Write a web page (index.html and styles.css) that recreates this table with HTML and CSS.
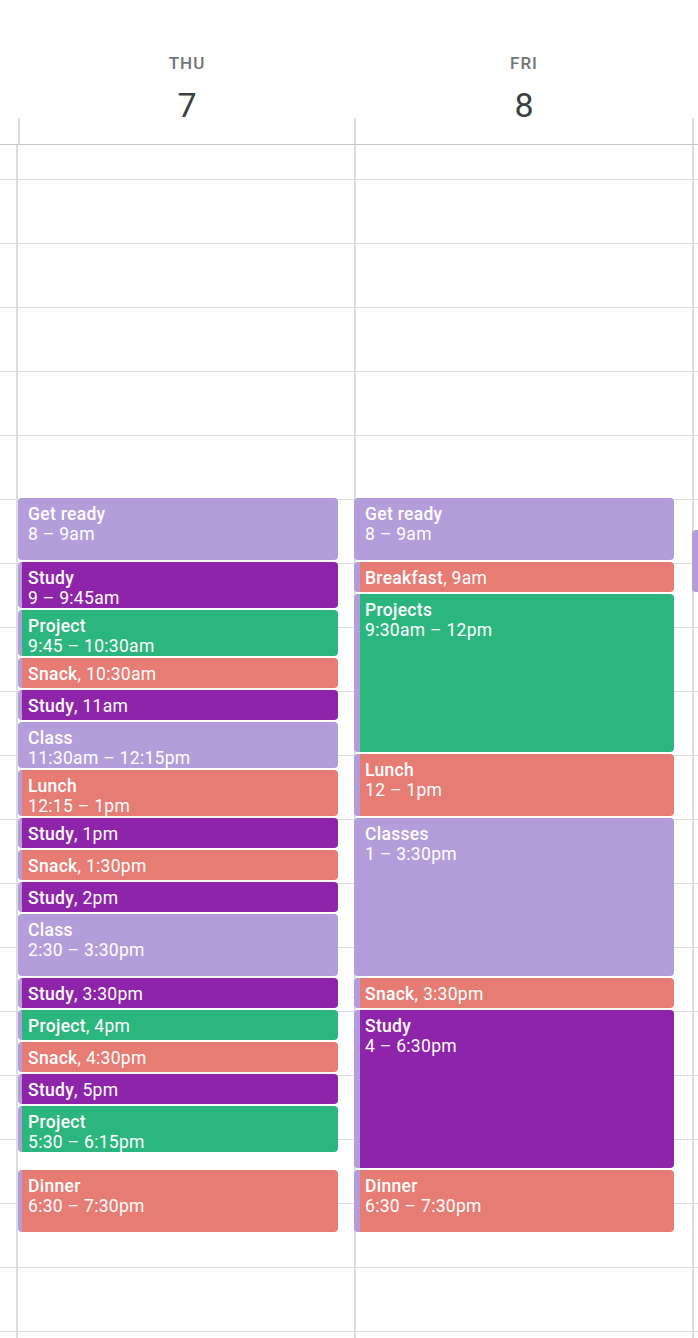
FILE: index.html
```html
<!DOCTYPE html>
<html lang="en">
<head>
<meta charset="utf-8">
<title>Week view</title>
<link rel="stylesheet" href="styles.css">
</head>
<body>
<div class="page">
  <header class="head">
    <div class="head-gutter"></div>
    <div class="day-head thu">
      <div class="day-label">
        <span class="dow">THU</span>
        <span class="dom">7</span>
      </div>
      <div class="head-strip"></div>
    </div>
    <div class="day-head fri">
      <div class="day-label">
        <span class="dow">FRI</span>
        <span class="dom">8</span>
      </div>
      <div class="head-strip"></div>
    </div>
    <div class="day-head sat">
      <div class="day-label"></div>
      <div class="head-strip"></div>
    </div>
  </header>

  <main class="body">
    <div class="body-inner">
      <div class="rows">
        <div class="row"></div><div class="row"></div><div class="row"></div><div class="row"></div>
        <div class="row"></div><div class="row"></div><div class="row"></div><div class="row"></div>
        <div class="row"></div><div class="row"></div><div class="row"></div><div class="row"></div>
        <div class="row"></div><div class="row"></div><div class="row"></div><div class="row"></div>
        <div class="row"></div><div class="row"></div><div class="row"></div><div class="row"></div>
      </div>
      <div class="days">
        <div class="gutter"></div>
        <div class="day thu">
          <div class="ev lav" style="top:383px;height:62px"><div class="t">Get ready</div><div>8 – 9am</div></div>
          <div class="ev grape strip" style="top:447px;height:46px"><div class="t">Study</div><div>9 – 9:45am</div></div>
          <div class="ev sage strip" style="top:495px;height:46px"><div class="t">Project</div><div>9:45 – 10:30am</div></div>
          <div class="ev flam strip" style="top:543px;height:30px"><span class="t">Snack</span>, 10:30am</div>
          <div class="ev grape strip" style="top:575px;height:30px"><span class="t">Study</span>, 11am</div>
          <div class="ev lav" style="top:607px;height:46px"><div class="t">Class</div><div>11:30am – 12:15pm</div></div>
          <div class="ev flam strip" style="top:655px;height:46px"><div class="t">Lunch</div><div>12:15 – 1pm</div></div>
          <div class="ev grape strip" style="top:703px;height:30px"><span class="t">Study</span>, 1pm</div>
          <div class="ev flam strip" style="top:735px;height:30px"><span class="t">Snack</span>, 1:30pm</div>
          <div class="ev grape strip" style="top:767px;height:30px"><span class="t">Study</span>, 2pm</div>
          <div class="ev lav" style="top:799px;height:62px"><div class="t">Class</div><div>2:30 – 3:30pm</div></div>
          <div class="ev grape strip" style="top:863px;height:30px"><span class="t">Study</span>, 3:30pm</div>
          <div class="ev sage strip" style="top:895px;height:30px"><span class="t">Project</span>, 4pm</div>
          <div class="ev flam strip" style="top:927px;height:30px"><span class="t">Snack</span>, 4:30pm</div>
          <div class="ev grape strip" style="top:959px;height:30px"><span class="t">Study</span>, 5pm</div>
          <div class="ev sage strip" style="top:991px;height:46px"><div class="t">Project</div><div>5:30 – 6:15pm</div></div>
          <div class="ev flam strip" style="top:1055px;height:62px"><div class="t">Dinner</div><div>6:30 – 7:30pm</div></div>
        </div>
        <div class="day fri">
          <div class="ev lav" style="top:383px;height:62px"><div class="t">Get ready</div><div>8 – 9am</div></div>
          <div class="ev flam strip" style="top:447px;height:30px"><span class="t">Breakfast</span>, 9am</div>
          <div class="ev sage strip" style="top:479px;height:158px"><div class="t">Projects</div><div>9:30am – 12pm</div></div>
          <div class="ev flam strip" style="top:639px;height:62px"><div class="t">Lunch</div><div>12 – 1pm</div></div>
          <div class="ev lav" style="top:703px;height:158px"><div class="t">Classes</div><div>1 – 3:30pm</div></div>
          <div class="ev flam strip" style="top:863px;height:30px"><span class="t">Snack</span>, 3:30pm</div>
          <div class="ev grape strip" style="top:895px;height:158px"><div class="t">Study</div><div>4 – 6:30pm</div></div>
          <div class="ev flam strip" style="top:1055px;height:62px"><div class="t">Dinner</div><div>6:30 – 7:30pm</div></div>
        </div>
        <div class="day sat">
          <div class="ev lav" style="top:415px;height:62px"></div>
        </div>
      </div>
    </div>
  </main>
</div>
</body>
</html>
```

FILE: styles.css
```css
html, body {
  margin: 0;
  padding: 0;
  background: #fff;
}

.page {
  width: 698px;
  height: 1338px;
  overflow: hidden;
  font-family: Roboto, "Noto Sans", Arial, sans-serif;
  background: #fff;
}

/* ---------- header ---------- */
.head {
  display: flex;
  height: 145px;
  box-sizing: border-box;
  border-bottom: 1px solid #c6c7ca;
}

.head-gutter {
  width: 18px;
  flex: none;
}

.day-head {
  display: flex;
  flex-direction: column;
  flex: none;
}

.day-head.thu { width: 336px; }
.day-head.fri { width: 338px; }
.day-head.sat { width: 20px; }

.day-label {
  height: 118px;
  display: flex;
  flex-direction: column;
  align-items: center;
  margin-left: 2px;
}

.head-strip {
  flex: 1;
  border-left: 2px solid #dadce0;
}

.dow {
  margin-top: 53px;
  font-size: 17px;
  line-height: 20px;
  font-weight: 500;
  letter-spacing: 1px;
  color: #70757a;
}

.dom {
  margin-top: 15px;
  font-size: 34px;
  line-height: 34px;
  font-weight: 400;
  color: #3c4043;
}

/* ---------- body ---------- */
.body {
  height: 1193px;
  overflow: hidden;
}

.body-inner {
  display: grid;
  margin-top: -30px;
}

.rows, .days {
  grid-area: 1 / 1;
}

.row {
  height: 64px;
  box-sizing: border-box;
  border-top: 1px solid #dadce0;
}

.days {
  display: flex;
  align-items: stretch;
}

.gutter {
  width: 16px;
  flex: none;
}

.day {
  position: relative;
  flex: none;
  width: 336px;
  border-left: 2px solid #dadce0;
}

.day.sat {
  width: 40px;
}

/* ---------- events ---------- */
.ev {
  position: absolute;
  left: 0;
  width: 320px;
  box-sizing: border-box;
  border-radius: 4px;
  padding: 6px 8px 0 10px;
  color: #fff;
  font-size: 17.5px;
  line-height: 20px;
  letter-spacing: 0.3px;
  font-weight: 400;
  overflow: hidden;
  white-space: nowrap;
}

.ev .t {
  font-weight: 500;
}

.ev.strip {
  border-left: 4px solid #b39ddb;
  padding-left: 6px;
}

.fri .ev {
  left: -2px;
  padding-left: 11px;
}

.fri .ev.strip {
  border-left-width: 6px;
  padding-left: 5px;
}

.sat .ev {
  left: -2px;
}

.lav   { background: #b39ddb; }
.grape { background: #8e24aa; }
.sage  { background: #2bb67d; }
.flam  { background: #e67c73; }
```
